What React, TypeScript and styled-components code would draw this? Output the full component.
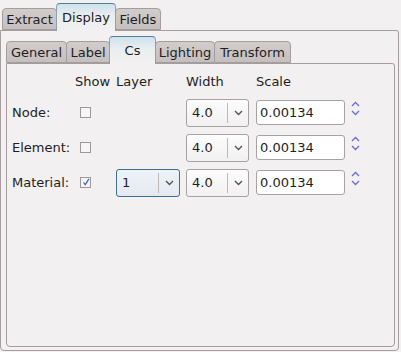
import { FC } from "react";
import styled, { createGlobalStyle } from "styled-components";

const GlobalStyle = createGlobalStyle`
  html, body {
    margin: 0;
    padding: 0;
    background: #f2f0f0;
  }
  body {
    font-family: "DejaVu Sans", "Liberation Sans", sans-serif;
    font-size: 13px;
    color: #1e1e1e;
  }
`;

type TTab = { label: string; width: number; active?: boolean };

const outerTabs: TTab[] = [
  { label: "Extract", width: 55 },
  { label: "Display", width: 60, active: true },
  { label: "Fields", width: 46 },
];

const innerTabs: TTab[] = [
  { label: "General", width: 61 },
  { label: "Label", width: 44 },
  { label: "Cs", width: 47, active: true },
  { label: "Lighting", width: 60 },
  { label: "Transform", width: 77 },
];

type TRow = { name: string; checked: boolean; layer?: string };

const rows: TRow[] = [
  { name: "Node:", checked: false },
  { name: "Element:", checked: false },
  { name: "Material:", checked: true, layer: "1" },
];

const Chevron: FC<{ up?: boolean; color: string }> = ({ up, color }) => (
  <svg width="9" height="6" viewBox="0 0 9 6">
    <path
      d={up ? "M1 5 L4.5 1.5 L8 5" : "M1 1 L4.5 4.5 L8 1"}
      fill="none"
      stroke={color}
      strokeWidth="1.3"
    />
  </svg>
);

const Check = () => (
  <svg width="11" height="11" viewBox="0 0 11 11">
    <path
      d="M2 5.5 L4.5 8.5 L9.5 0.5"
      fill="none"
      stroke="#2a62c8"
      strokeWidth="1.6"
    />
  </svg>
);

const Combo: FC<{ value: string; focused?: boolean }> = ({ value, focused }) => (
  <ComboBox $focused={focused}>
    <span className="value">{value}</span>
    <span className="arrow">
      <Chevron color="#505050" />
    </span>
  </ComboBox>
);

const App = () => {
  return (
    <Main>
      <GlobalStyle />
      <TabBar $outer>
        {outerTabs.map((t) => (
          <Tab key={t.label} $w={t.width} $active={t.active} $outer>
            {t.label}
          </Tab>
        ))}
      </TabBar>
      <OuterPane>
        <TabBar>
          {innerTabs.map((t) => (
            <Tab key={t.label} $w={t.width} $active={t.active}>
              {t.label}
            </Tab>
          ))}
        </TabBar>
        <InnerPane>
          <Form>
            <Header />
            <Header className="show">Show</Header>
            <Header>Layer</Header>
            <Header>Width</Header>
            <Header>Scale</Header>
            <Header />
            {rows.map((r) => (
              <Row key={r.name}>
                <RowLabel>{r.name}</RowLabel>
                <Cell>
                  <CheckBox>{r.checked && <Check />}</CheckBox>
                </Cell>
                <Cell>{r.layer && <Combo value={r.layer} focused />}</Cell>
                <Cell>
                  <Combo value="4.0" />
                </Cell>
                <Cell>
                  <ScaleInput>0.00134</ScaleInput>
                </Cell>
                <Spinner>
                  <Chevron up color="#6b6bd6" />
                  <Chevron color="#6b6bd6" />
                </Spinner>
              </Row>
            ))}
          </Form>
        </InnerPane>
      </OuterPane>
    </Main>
  );
};

export default App;

const Main = styled.div`
  width: 401px;
  height: 352px;
  display: flex;
  flex-direction: column;
  box-sizing: border-box;
`;

const TabBar = styled.div<{ $outer?: boolean }>`
  display: flex;
  align-items: flex-end;
  height: ${({ $outer }) => ($outer ? "30px" : "27px")};
  padding-left: ${({ $outer }) => ($outer ? "2px" : "0")};
  position: relative;
  z-index: 1;
`;

const Tab = styled.div<{ $w: number; $active?: boolean; $outer?: boolean }>`
  box-sizing: border-box;
  width: ${({ $w }) => $w}px;
  height: ${({ $active, $outer }) =>
    $active ? ($outer ? "28px" : "28px") : "22px"};
  margin-bottom: ${({ $active }) => ($active ? "-1px" : "0")};
  display: flex;
  align-items: center;
  justify-content: center;
  border: 1px solid ${({ $active }) => ($active ? "#8aa2b0" : "#a59d9d")};
  border-top-color: ${({ $active }) => ($active ? "#4f7f98" : "#a59d9d")};
  border-bottom: ${({ $active }) => ($active ? "none" : "1px solid #a59d9d")};
  border-radius: 4px 4px 0 0;
  margin-right: -1px;
  background: ${({ $active }) =>
    $active
      ? "linear-gradient(#cfe2ec, #e9eef1 45%, #f2f0f0)"
      : "linear-gradient(#d2cccc, #c5bfbf)"};
  color: #1e1e1e;
  white-space: nowrap;
  padding-bottom: ${({ $active }) => ($active ? "1px" : "0")};
  position: relative;
  z-index: ${({ $active }) => ($active ? 2 : 1)};
`;

const OuterPane = styled.div`
  box-sizing: border-box;
  width: 399px;
  height: 321px;
  border: 1px solid #a59d9d;
  border-radius: 0 3px 4px 4px;
  padding: 5px 3px 3px 5px;
  display: flex;
  flex-direction: column;
`;

const InnerPane = styled.div`
  box-sizing: border-box;
  flex: 1;
  border: 1px solid #a59d9d;
  border-radius: 0 3px 4px 4px;
  padding: 8px 0 0 5px;
`;

const Form = styled.div`
  display: grid;
  grid-template-columns: 63px 41px 70px 70px 95px 16px;
  grid-template-rows: 23px repeat(3, 35px);
  align-items: center;
`;

const Header = styled.div`
  align-self: start;
  line-height: 20px;
  &.show {
    padding-left: 0;
  }
`;

const Row = styled.div`
  display: contents;
`;

const RowLabel = styled.div`
  line-height: 20px;
`;

const Cell = styled.div`
  display: flex;
  align-items: center;
`;

const CheckBox = styled.div`
  box-sizing: border-box;
  width: 11px;
  height: 11px;
  margin-left: 5px;
  border: 1px solid #a09898;
  background: #f7f6f6;
  display: flex;
  align-items: center;
  justify-content: center;
  svg {
    margin-top: -1px;
    margin-left: 1px;
  }
`;

const ComboBox = styled.div<{ $focused?: boolean }>`
  box-sizing: border-box;
  width: ${({ $focused }) => ($focused ? "64px" : "63px")};
  height: 28px;
  border: 1px solid ${({ $focused }) => ($focused ? "#3d6f8f" : "#aaa2a2")};
  border-radius: 3px;
  background: ${({ $focused }) =>
    $focused
      ? "linear-gradient(#eef3f7, #e3eaef)"
      : "linear-gradient(#fdfdfd, #f2f0f0)"};
  display: flex;
  align-items: center;
  .value {
    flex: 1;
    padding-left: 5px;
  }
  .arrow {
    width: 20px;
    height: 20px;
    border-left: 1px solid #c0b8b8;
    display: flex;
    align-items: center;
    justify-content: center;
  }
`;

const ScaleInput = styled.div`
  box-sizing: border-box;
  width: 89px;
  height: 25px;
  border: 1px solid #aaa2a2;
  border-radius: 3px;
  background: #ffffff;
  padding-left: 3px;
  display: flex;
  align-items: center;
`;

const Spinner = styled.div`
  display: flex;
  flex-direction: column;
  gap: 3px;
  align-self: start;
  margin-top: 6px;
`;
